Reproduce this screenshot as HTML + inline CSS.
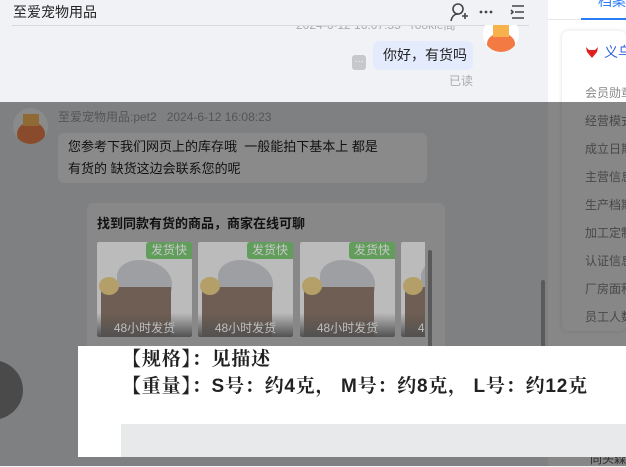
<!DOCTYPE html>
<html><head><meta charset="utf-8"><style>
*{margin:0;padding:0;box-sizing:border-box}
body{width:626px;height:466px;overflow:hidden;position:relative;background:#f0f2f6;font-family:"Liberation Sans","Noto Sans CJK SC",sans-serif;color:#222}
.a{position:absolute}
.t{white-space:nowrap}
.img{position:absolute;top:242px;width:95px;height:95px;background:#e8e8ea;overflow:hidden;border-radius:2px}
.img .rock{position:absolute;left:4px;top:45px;width:70px;height:50px;background:#5a3a26}
.img .liz{position:absolute;left:2px;top:35px;width:20px;height:18px;border-radius:50%;background:#d9b54a}
.img .shark{position:absolute;left:20px;top:18px;width:55px;height:40px;background:#b0b4bb;border-radius:40% 60% 30% 50%}
.img .tag{position:absolute;right:0;top:0;width:46px;height:17px;background:#3fb134;color:#fff;font-size:12px;text-align:center;line-height:17px;border-radius:3px 0 0 3px}
.img .bot{position:absolute;left:0;bottom:0;width:100%;height:24px;background:linear-gradient(transparent,#222);color:#eee;font-size:12px;text-align:center;line-height:30px}
</style></head><body>
<!-- top chat -->
<div class="a t" style="left:296px;top:16px;font-size:12px;color:#aaa">2024-6-12 16:07:55&nbsp;&nbsp;&nbsp;rookie阁</div>
<div class="a" style="left:0;top:0;width:548px;height:25px;background:#f0f2f6"></div>
<div class="a t" style="left:13px;top:2px;font-size:14px;color:#222">至爱宠物用品</div>
<svg class="a" style="left:449px;top:2px" width="80" height="20" viewBox="0 0 80 20"><circle cx="9" cy="7" r="5" fill="none" stroke="#444" stroke-width="1.6"/><path d="M2 19c1-5 4-7 7-7M13 14h6M16 11v6" fill="none" stroke="#444" stroke-width="1.6"/><circle cx="32" cy="10" r="1.4" fill="#444"/><circle cx="37" cy="10" r="1.4" fill="#444"/><circle cx="42" cy="10" r="1.4" fill="#444"/><path d="M63 4h12M66 10h9M63 16h12M62 8l2 2-2 2" stroke="#444" stroke-width="1.6" fill="none"/></svg>
<div class="a" style="left:12px;top:25px;width:517px;height:1px;background:#d8d9dc"></div>
<div class="a" style="left:483px;top:16px;width:36px;height:36px;border-radius:50%;background:#fff;overflow:hidden;clip-path:inset(9px 0 0 0)"><div style="position:absolute;left:4px;top:17px;width:28px;height:22px;border-radius:50%;background:#f47a44"></div><div style="position:absolute;left:10px;top:9px;width:16px;height:12px;background:#f8b24c"></div></div>
<div class="a" style="left:373px;top:41px;width:100px;height:29px;background:#e4ebfc;border-radius:6px;font-size:14px;line-height:29px;padding-left:10px">你好，有货吗</div>
<div class="a" style="left:352px;top:55px;width:14px;height:15px;background:#c6c8cc;border-radius:3px;color:#fff;font-size:9px;text-align:center;line-height:12px">···</div>
<div class="a t" style="left:449px;top:72px;font-size:12px;color:#aaa">已读</div>
<!-- right panel -->
<div class="a" style="left:548px;top:0;width:78px;height:466px;background:#fff"></div>
<div class="a" style="left:548px;top:19px;width:78px;height:1px;background:#e8e8e8"></div>
<div class="a" style="left:581px;top:18px;width:45px;height:2px;background:#2a7cf4"></div>
<div class="a t" style="left:598px;top:-9px;font-size:14px;color:#2a7cf4">档案</div>
<div class="a" style="left:562px;top:31px;width:64px;height:300px;background:#fff;border-radius:6px;box-shadow:0 0 4px #ddd"></div>
<svg class="a" style="left:585px;top:45px" width="14" height="14"><path d="M1 2l3 3h6l3-3-1 5-5 6-5-6z" fill="#e02020"/></svg>
<div class="a t" style="left:604px;top:42px;font-size:14px;color:#2a5fe0">义乌</div>
<div class="a" style="left:585px;top:79px;font-size:12px;color:#888;line-height:28px;white-space:nowrap">会员勋章<br>经营模式<br>成立日期<br>主营信息<br>生产档期<br>加工定制<br>认证信息<br>厂房面积<br>员工人数</div>
<div class="a t" style="left:590px;top:450px;font-size:12px;color:#555">同头森</div>
<!-- overlay -->
<div class="a" style="left:0;top:102px;width:626px;height:364px;background:rgba(0,0,0,0.47)"></div>
<div class="a" style="left:13px;top:108px;width:35px;height:36px;border-radius:50%;background:#8a8a8a;overflow:hidden"><div style="position:absolute;left:4px;top:14px;width:28px;height:24px;border-radius:50%;background:#8a4a2c"></div><div style="position:absolute;left:10px;top:6px;width:16px;height:12px;background:#8f6a34"></div></div>
<div class="a t" style="left:58px;top:108px;font-size:12px;color:#555">至爱宠物用品:pet2&nbsp;&nbsp;&nbsp;2024-6-12 16:08:23</div>
<div class="a" style="left:58px;top:133px;width:369px;height:50px;background:#8a8a8a;border-radius:6px;font-size:13px;line-height:22px;padding:3px 10px;color:#111">您参考下我们网页上的库存哦&nbsp;&nbsp;一般能拍下基本上 都是<br>有货的 缺货这边会联系您的呢</div>
<div class="a" style="left:87px;top:203px;width:358px;height:150px;background:#888;border-radius:6px"></div>
<div class="a t" style="left:97px;top:213px;font-size:13px;font-weight:bold;color:#111">找到同款有货的商品，商家在线可聊</div>
<div class="a" style="left:97px;top:242px;width:328px;height:95px;overflow:hidden;opacity:.53">
<div class="img" style="left:0;top:0"><div class="shark"></div><div class="rock"></div><div class="liz"></div><div class="tag">发货快</div><div class="bot">48小时发货</div></div>
<div class="img" style="left:101px;top:0"><div class="shark"></div><div class="rock"></div><div class="liz"></div><div class="tag">发货快</div><div class="bot">48小时发货</div></div>
<div class="img" style="left:203px;top:0"><div class="shark"></div><div class="rock"></div><div class="liz"></div><div class="tag">发货快</div><div class="bot">48小时发货</div></div>
<div class="img" style="left:304px;top:0"><div class="shark"></div><div class="rock"></div><div class="liz"></div><div class="bot">48小时发货</div></div>
</div>
<div class="a" style="left:428px;top:250px;width:4px;height:100px;background:#5a5a5a;border-radius:2px"></div>
<div class="a" style="left:541px;top:280px;width:4px;height:70px;background:#5a5a5a;border-radius:2px"></div>
<div class="a" style="left:-40px;top:360px;width:63px;height:60px;border-radius:50%;background:#4a4a4a"></div>
<!-- white popup -->
<div class="a" style="left:78px;top:346px;width:548px;height:111px;background:#fff"></div>
<div class="a" style="left:121px;top:424px;width:505px;height:33px;background:#e8e9eb"></div>
<div class="a t" style="left:122px;top:346px;font-size:19px;letter-spacing:0.8px;font-weight:bold;line-height:27px;color:#222;font-family:'Liberation Serif','Noto Serif CJK SC',serif">【规格】：见描述<br>【重量】：<span style="font-family:'Liberation Sans',sans-serif">S</span>号：约<span style="font-family:'Liberation Sans',sans-serif">4</span>克， <span style="font-family:'Liberation Sans',sans-serif">M</span>号：约<span style="font-family:'Liberation Sans',sans-serif">8</span>克， <span style="font-family:'Liberation Sans',sans-serif">L</span>号：约<span style="font-family:'Liberation Sans',sans-serif">12</span>克</div>
</body></html>
